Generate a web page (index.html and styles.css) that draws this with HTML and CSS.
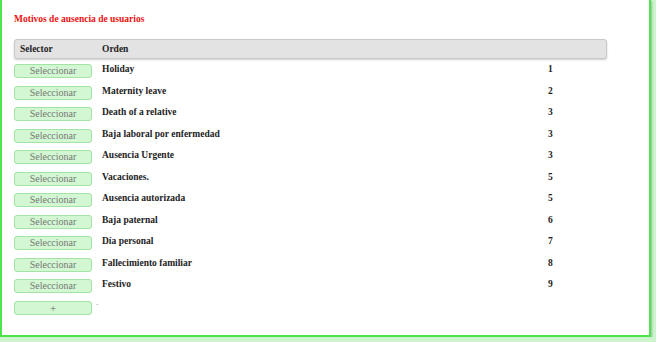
FILE: index.html
```html
<!DOCTYPE html>
<html lang="es">
<head>
  <meta charset="UTF-8" />
  <title>Motivos de ausencia</title>
  <link rel="stylesheet" href="styles.css">
</head>
<body>
  <div class="panel">
    <h2 class="title">Motivos de ausencia de usuarios</h2>

    <div class="list">
      <div class="head">
        <span class="head-sel">Selector</span>
        <span>Orden</span>
        <span></span>
      </div>

      <div class="row"><button class="btn">Seleccionar</button><span class="name">Holiday</span><span class="order">1</span></div>
      <div class="row"><button class="btn">Seleccionar</button><span class="name">Maternity leave</span><span class="order">2</span></div>
      <div class="row"><button class="btn">Seleccionar</button><span class="name">Death of a relative</span><span class="order">3</span></div>
      <div class="row"><button class="btn">Seleccionar</button><span class="name">Baja laboral por enfermedad</span><span class="order">3</span></div>
      <div class="row"><button class="btn">Seleccionar</button><span class="name">Ausencia Urgente</span><span class="order">3</span></div>
      <div class="row"><button class="btn">Seleccionar</button><span class="name">Vacaciones.</span><span class="order">5</span></div>
      <div class="row"><button class="btn">Seleccionar</button><span class="name">Ausencia autorizada</span><span class="order">5</span></div>
      <div class="row"><button class="btn">Seleccionar</button><span class="name">Baja paternal</span><span class="order">6</span></div>
      <div class="row"><button class="btn">Seleccionar</button><span class="name">Día personal</span><span class="order">7</span></div>
      <div class="row"><button class="btn">Seleccionar</button><span class="name">Fallecimiento familiar</span><span class="order">8</span></div>
      <div class="row"><button class="btn">Seleccionar</button><span class="name">Festivo</span><span class="order">9</span></div>

      <div class="row add-row">
        <button class="btn btn-add">+</button>
        <span class="dot">.</span>
      </div>
    </div>
  </div>
</body>
</html>
```

FILE: styles.css
```css
* {
  box-sizing: border-box;
}

body {
  margin: 0;
  background: #cdf5cd;
  font-family: "Liberation Serif", "Times New Roman", serif;
  color: #222;
}

.panel {
  width: 651px;
  height: 337px;
  background: #fff;
  border: 2px solid #4fe24f;
  border-top: none;
  box-shadow: 1px 1px 2px rgba(0, 0, 0, 0.25);
  padding: 13px 0 0 12px;
}

.title {
  margin: 0;
  font-size: 9.5px;
  line-height: 12px;
  font-weight: bold;
  color: #ee1111;
}

.list {
  width: 593px;
  margin-top: 14px;
}

.head {
  display: grid;
  grid-template-columns: 77px 1fr 60px;
  column-gap: 10px;
  height: 20px;
  align-items: center;
  background: #e3e3e3;
  border: 1px solid #c9c9c9;
  border-radius: 3px;
  box-shadow: 0 1px 2px rgba(0, 0, 0, 0.2);
  font-size: 9.5px;
  font-weight: bold;
  color: #222;
}

.head-sel {
  padding-left: 5px;
}

.list .head {
  margin-bottom: 4px;
}

.row {
  display: grid;
  grid-template-columns: 78px 1fr 61px;
  column-gap: 10px;
  height: 21.5px;
  align-items: start;
  font-size: 9.5px;
  line-height: 12px;
  font-weight: bold;
}

.btn {
  margin-top: 1px;
  height: 14px;
  padding: 0;
  background: #d2f7d2;
  border: 1px solid #a3e3a3;
  border-radius: 3px;
  font-family: "Liberation Serif", "Times New Roman", serif;
  font-size: 10px;
  line-height: 12px;
  color: #777;
  cursor: pointer;
}

.btn-add {
  font-size: 11px;
  color: #666;
}

.name {
  color: #222;
}

.order {
  padding-left: 2px;
  color: #222;
}

.add-row {
  grid-template-columns: 78px 1fr;
  column-gap: 4px;
}

.dot {
  font-weight: normal;
  color: #999;
  line-height: 4px;
}
```
